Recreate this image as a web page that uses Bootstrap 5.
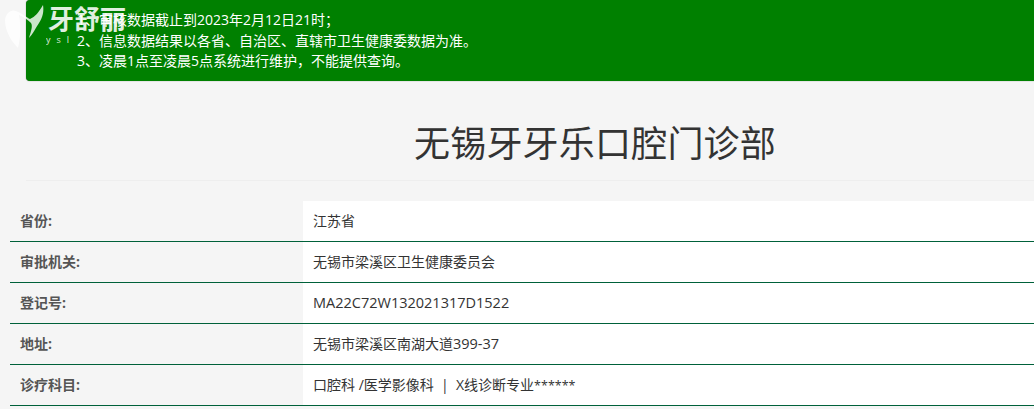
<!DOCTYPE html>
<html lang="zh">
<head>
<meta charset="utf-8">
<title>无锡牙牙乐口腔门诊部</title>
<link rel="stylesheet" href="https://cdn.jsdelivr.net/npm/bootstrap@5.3.0/dist/css/bootstrap.min.css">
<style>
html,body{height:409px;overflow:hidden}
body{background:#f5f5f5;font-family:"Open Sans","Noto Sans CJK SC",sans-serif;color:#333;position:relative}
.logo-over{position:absolute;left:2px;top:2px;color:#fff;pointer-events:none}
.logo-name{font-size:26px;line-height:30px;font-weight:700;opacity:.88;font-family:"Noto Sans CJK SC",sans-serif;margin-top:1px}
.logo-sub{font-size:9px;line-height:10px;letter-spacing:6px;margin-top:2px;margin-left:-2px;opacity:.85}
.notice{background:#008000;color:#fff;margin-left:26px;height:81px;border-radius:4px 0 0 4px;padding:10px 0 0 51px;font-size:14px;line-height:20.5px;box-shadow:0 0 1px #555}
.title-wrap{margin:0 0 0 26px;height:100px;border-bottom:1px solid #eee;text-align:center}
.title-wrap h1{font-size:36px;font-weight:400;line-height:40px;margin:0;padding-top:43px;color:#333;letter-spacing:.2px;padding-left:130px}
.info{margin:20px 0 0 10px}
.info-row{height:41px;border-bottom:1px solid #00613a}
.info-key{width:293px;padding-left:10px;font-size:14px;font-weight:700;color:#555;line-height:39px;flex:none}
.info-val{background:#fff;padding-left:10px;font-size:14px;line-height:39px;color:#333;flex:1 1 auto}
.latin-wide{font-size:14.5px}
.stars{font-size:12.5px}
</style>
</head>
<body>
<div class="logo-over d-flex">
  <svg width="46" height="48" viewBox="0 0 46 48" fill="#fff" aria-hidden="true">
    <path d="M3 18C4 11 9 7 14 9C20 11 25 16 28 17C33 15 37 10 41 3C42 9 41 15 37 21C33 27 31 32 27 36C29 29 31 24 29 21C26 18 22 15 17 13C19 22 19 34 16 46C10 40 3 30 3 18Z" opacity=".8"/>
  </svg>
  <div>
    <div class="logo-name">牙舒丽</div>
    <div class="logo-sub">ysl</div>
  </div>
</div>
<div class="notice">
  <div>1、审核数据截止到2023年2月12日21时；</div>
  <div>2、信息数据结果以各省、自治区、直辖市卫生健康委数据为准。</div>
  <div>3、凌晨1点至凌晨5点系统进行维护，不能提供查询。</div>
</div>
<div class="title-wrap"><h1>无锡牙牙乐口腔门诊部</h1></div>
<div class="info">
  <div class="info-row d-flex"><div class="info-key">省份:</div><div class="info-val">江苏省</div></div>
  <div class="info-row d-flex"><div class="info-key">审批机关:</div><div class="info-val">无锡市梁溪区卫生健康委员会</div></div>
  <div class="info-row d-flex"><div class="info-key">登记号:</div><div class="info-val latin-wide">MA22C72W132021317D1522</div></div>
  <div class="info-row d-flex"><div class="info-key">地址:</div><div class="info-val">无锡市梁溪区南湖大道<span class="latin-wide">399-37</span></div></div>
  <div class="info-row d-flex"><div class="info-key">诊疗科目:</div><div class="info-val">口腔科 /医学影像科 &nbsp;|&nbsp; X线诊断专业<span class="stars">******</span></div></div>
</div>
</body>
</html>
